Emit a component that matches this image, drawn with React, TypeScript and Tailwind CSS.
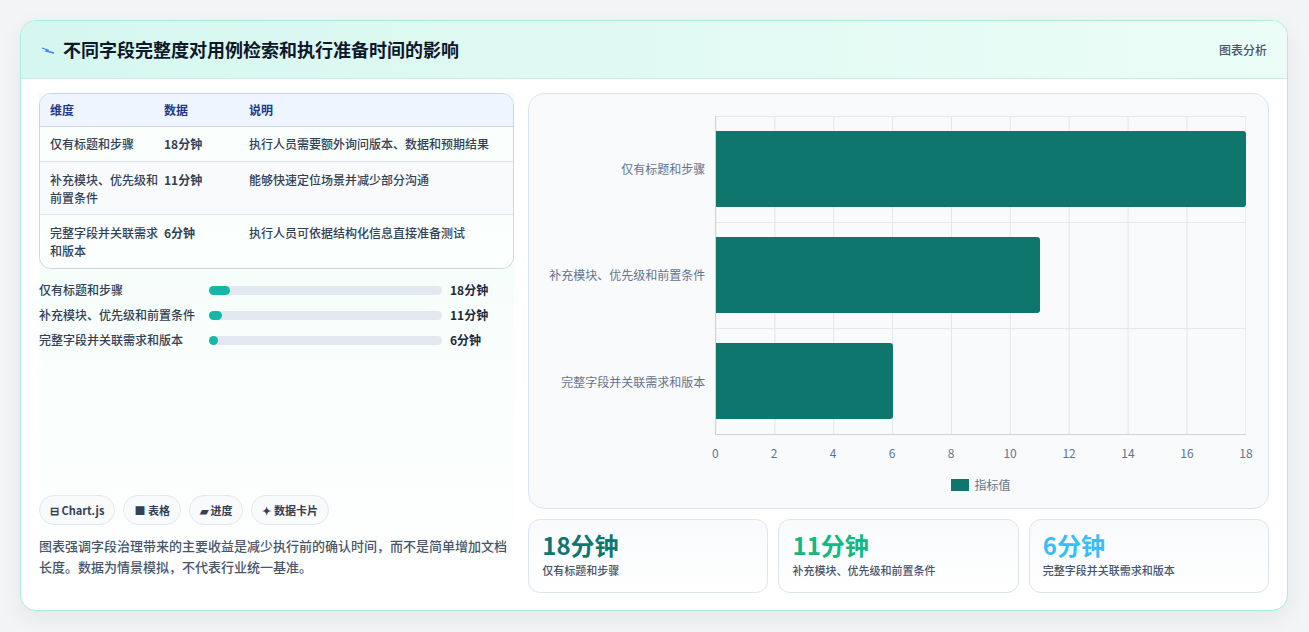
import React from 'react';

const rows = [
  { name: '仅有标题和步骤', shortA: '仅有标题和步骤', value: 18, note: '执行人员需要额外询问版本、数据和预期结果' },
  { name: '补充模块、优先级和前置条件', shortA: '补充模块、优先级和前置条件', value: 11, note: '能够快速定位场景并减少部分沟通' },
  { name: '完整字段并关联需求和版本', shortA: '完整字段并关联需求和版本', value: 6, note: '执行人员可依据结构化信息直接准备测试' },
];

const font = { fontFamily: '"Noto Sans CJK SC", "Noto Sans", sans-serif' };
const ticks = [0, 2, 4, 6, 8, 10, 12, 14, 16, 18];

function Chart() {
  return (
    <div className="h-[416px] rounded-2xl border border-[#dbe4ef] bg-[#f8fafc] pl-[14px] pr-[22px] pt-[22px]">
      <div className="flex">
        <div className="flex h-[319px] w-[172px] flex-col justify-around pr-[10px] text-right text-[12px] text-[#64748b]">
          {rows.map((r) => (
            <div key={r.name}>{r.name}</div>
          ))}
        </div>
        <div className="relative h-[319px] flex-1 border-b border-l border-[#cbd5e1]">
          <svg className="absolute inset-0 h-full w-full" preserveAspectRatio="none" viewBox="0 0 522 319">
            {ticks.map((t) => (
              <line key={t} x1={(t / 18) * 522} x2={(t / 18) * 522} y1={0} y2={319} stroke="#e5e7eb" strokeWidth={1} />
            ))}
            {[0, 106.3, 212.6].map((y) => (
              <line key={y} x1={0} x2={522} y1={y + 0.5} y2={y + 0.5} stroke="#e5e7eb" strokeWidth={1} />
            ))}
          </svg>
          <div className="relative flex h-full flex-col justify-around">
            {rows.map((r) => (
              <div key={r.name} className="h-[76px] rounded-r-[3px] bg-[#0f766e]" style={{ width: `${(r.value / 18) * 100}%` }} />
            ))}
          </div>
        </div>
      </div>
      <div className="ml-[172px] flex justify-between pt-[9px] text-[12px] text-[#64748b]">
        {ticks.map((t) => (
          <span key={t} className="w-0 text-center flex justify-center">{t}</span>
        ))}
      </div>
      <div className="mt-[14px] ml-[172px] flex items-center justify-center gap-[6px] text-[12px] text-[#64748b]">
        <span className="h-[12px] w-[18px] bg-[#0f766e]" />
        指标值
      </div>
    </div>
  );
}

export default function App() {
  return (
    <div className="min-h-[632px] bg-[#f3f4f6] p-[20px] pr-[21px]" style={font}>
      <div className="h-[591px] overflow-hidden rounded-2xl border border-[#a7ecdf] bg-white shadow-[0_8px_24px_rgba(0,0,0,0.06)]">
        <div className="flex h-[58px] items-center justify-between border-b border-[#c9eee6] bg-gradient-to-r from-[#d5f7ef] to-[#ecfdf7] px-[20px]">
          <div className="flex items-center gap-[8px]">
            <svg width="14" height="10" viewBox="0 0 14 10">
              <path d="M1 3 L7 5 L5 6 L13 8" stroke="#3b82f6" strokeWidth="1.3" fill="none" />
            </svg>
            <h1 className="text-[18px] font-bold text-[#0f172a]">不同字段完整度对用例检索和执行准备时间的影响</h1>
          </div>
          <span className="text-[12px] font-medium text-[#475569]">图表分析</span>
        </div>
        <div className="flex gap-[14px] px-[18px] pt-[14px]">
          <div className="flex h-[500px] w-[476px] flex-col bg-gradient-to-b from-[#f0fdf9] to-white">
            <div className="overflow-hidden rounded-xl border border-[#cbd5e1] text-[12px]">
              <div className="grid h-[33px] grid-cols-[114px_85px_1fr] items-center border-b border-[#cbd5e1] bg-[#eef5ff] px-[10px] font-semibold text-[#1e3a8a]">
                <span>维度</span><span>数据</span><span>说明</span>
              </div>
              {rows.map((r, i) => (
                <div key={r.name} className={`grid grid-cols-[114px_85px_1fr] px-[10px] text-[#334155] ${i < 2 ? 'border-b border-[#dbe4ef]' : ''} ${i === 0 ? 'h-[35px] items-center' : 'h-[53px] pt-[9px]'} ${i === 1 ? 'bg-[#f8fafc]' : 'bg-white/60'}`}>
                  <span className="font-medium leading-[18px]">{i === 1 ? '补充模块、优先级和前置条件' : r.name}</span>
                  <span className="font-semibold">{r.value}分钟</span>
                  <span className="font-medium">{r.note}</span>
                </div>
              ))}
            </div>
            <div className="mt-[12px] flex flex-col gap-[7px] text-[12px] font-medium text-[#334155]">
              {rows.map((r) => (
                <div key={r.name} className="flex h-[18px] items-center">
                  <span className="w-[170px]">{r.name}</span>
                  <div className="h-[9px] w-[233px] rounded-full bg-[#e2e8f0]">
                    <div className="h-full min-w-[9px] rounded-full bg-[#14b8a6]" style={{ width: `${(r.value / 18) * 9}%` }} />
                  </div>
                  <span className="ml-[8px] font-bold text-[#1e293b]">{r.value}分钟</span>
                </div>
              ))}
            </div>
            <div className="mt-auto pb-[16px]">
              <div className="flex gap-[8px] text-[11px] font-semibold text-[#334155]">
                <span className="rounded-full border border-[#e2e8f0] bg-[#f8fafc] px-[10px] py-[6px]">⊟ Chart.js</span>
                <span className="rounded-full border border-[#e2e8f0] bg-[#f8fafc] px-[10px] py-[6px]">■ 表格</span>
                <span className="rounded-full border border-[#e2e8f0] bg-[#f8fafc] px-[10px] py-[6px]">▰ 进度</span>
                <span className="rounded-full border border-[#e2e8f0] bg-[#f8fafc] px-[10px] py-[6px]">✦ 数据卡片</span>
              </div>
              <p className="mt-[10px] text-[13px] font-medium leading-[21px] text-[#475569]">
                图表强调字段治理带来的主要收益是减少执行前的确认时间，而不是简单增加文档长度。数据为情景模拟，不代表行业统一基准。
              </p>
            </div>
          </div>
          <div className="flex w-[742px] flex-col gap-[10px]">
            <Chart />
            <div className="grid grid-cols-3 gap-[10px]">
              {[
                ['18分钟', '仅有标题和步骤', 'text-[#0f766e]'],
                ['11分钟', '补充模块、优先级和前置条件', 'text-[#10b981]'],
                ['6分钟', '完整字段并关联需求和版本', 'text-[#38bdf8]'],
              ].map(([v, l, c]) => (
                <div key={l} className="h-[74px] rounded-xl border border-[#dbe4ef] bg-gradient-to-b from-[#f8fafc] to-white px-[13px] pt-[10px]">
                  <div className={`text-[24px] font-bold leading-[30px] ${c}`}>{v}</div>
                  <div className="mt-[2px] text-[11px] font-medium text-[#475569]">{l}</div>
                </div>
              ))}
            </div>
          </div>
        </div>
      </div>
    </div>
  );
}
